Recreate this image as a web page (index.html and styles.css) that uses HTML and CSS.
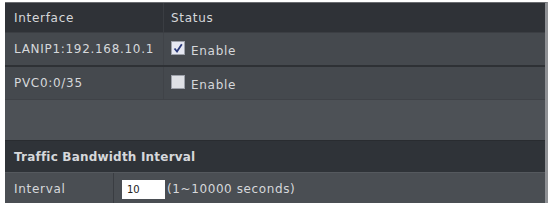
FILE: index.html
```html
<!DOCTYPE html>
<html>
<head>
<meta charset="utf-8">
<link rel="stylesheet" href="styles.css">
</head>
<body>
<div class="frame">
  <div class="row head">
    <div class="c1">Interface</div>
    <div class="c2">Status</div>
  </div>
  <div class="row item first">
    <div class="c1">LANIP1:192.168.10.1</div>
    <div class="c2"><span class="box checked"><svg width="12" height="12" viewBox="0 0 12 12"><path d="M2.5 6.5 L5 9.5 L9.8 2.2" fill="none" stroke="#2b3a7a" stroke-width="1.8"/></svg></span><span class="lbl">Enable</span></div>
  </div>
  <div class="row item">
    <div class="c1">PVC0:0/35</div>
    <div class="c2"><span class="box"></span><span class="lbl">Enable</span></div>
  </div>
  <div class="spacer"></div>
  <div class="row section">
    <div class="title">Traffic Bandwidth Interval</div>
  </div>
  <div class="row interval">
    <div class="k1">Interval</div>
    <div class="k2"><span class="input">10</span><span class="hint">(1~10000 seconds)</span></div>
  </div>
</div>
</body>
</html>
```
FILE: styles.css
```css
html, body {
  margin: 0;
  padding: 0;
  background: #ffffff;
}
.frame {
  margin: 2px 0 0 5px;
  width: 540px;
  border-top: 1px solid #6a6c70;
  border-right: 3px solid #8e9094;
  font-family: "DejaVu Sans", Verdana, sans-serif;
  font-size: 12px;
  color: #d6d8db;
  letter-spacing: 0.7px;
}
.row {
  display: flex;
  align-items: center;
}
.head {
  height: 29px;
  background: #2f3237;
  border-bottom: 1px solid #3b3e43;
}
.c1 {
  width: 149px;
  padding-left: 9px;
  align-self: stretch;
  display: flex;
  align-items: center;
  border-right: 1px solid #3a3d42;
}
.c2 {
  padding-left: 7px;
  display: flex;
  align-items: center;
}
.item {
  height: 32px;
  background: #45494e;
}
.item.first {
  border-bottom: 2px solid #2e3135;
}
.item .c1 {
  border-right: 1px solid #404348;
}
.box {
  width: 12px;
  height: 12px;
  background: #dfe1e6;
  border: 1px solid #9da1aa;
  display: inline-flex;
  margin-right: 6px;
  margin-top: -3px;
}
.box.checked {
  background: #e6e8f2;
}
.lbl {
  padding-top: 3px;
}
.spacer {
  height: 40px;
  background: #4d5156;
  border-top: 1px solid #3f4247;
}
.section {
  height: 31px;
  background: #2f3338;
  border-top: 1px solid #292c30;
  border-bottom: 1px solid #55595e;
}
.title {
  padding-left: 9px;
  font-weight: bold;
  letter-spacing: 0.2px;
}
.interval {
  height: 32px;
  background: #4a4e53;
}
.k1 {
  width: 99px;
  padding-left: 9px;
  align-self: stretch;
  display: flex;
  align-items: center;
  border-right: 1px solid #3a3d42;
}
.k2 {
  padding-left: 8px;
  display: flex;
  align-items: center;
}
.input {
  width: 38px;
  height: 19px;
  background: #ffffff;
  color: #222222;
  font-size: 10px;
  letter-spacing: 0;
  padding-left: 5px;
  display: inline-flex;
  align-items: center;
  margin-right: 2px;
}
.hint {
  letter-spacing: 0.6px;
}
```
